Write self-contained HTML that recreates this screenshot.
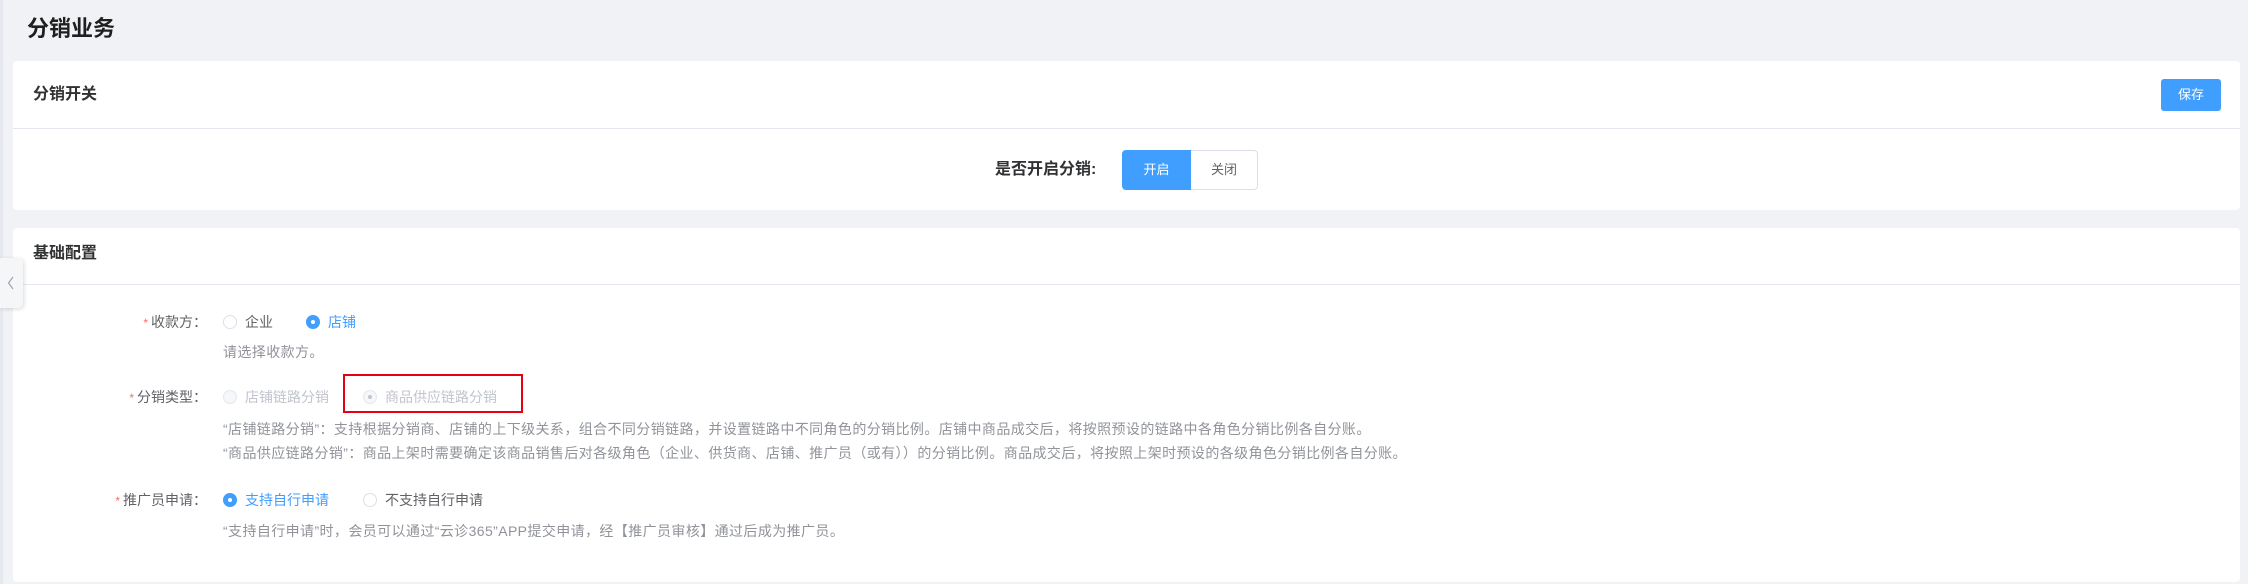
<!DOCTYPE html>
<html><head><meta charset="utf-8"><style>
*{margin:0;padding:0;box-sizing:border-box}
body{width:2248px;height:584px;background:#f0f2f5;font-family:"Liberation Sans","Noto Sans CJK SC",sans-serif;position:relative;overflow:hidden;color:#303133}
.a{position:absolute;white-space:nowrap}
.card{position:absolute;left:13px;width:2227px;background:#fff;border-radius:4px}
.hd{font-size:16px;font-weight:bold;color:#303133}
.line{position:absolute;left:0;right:0;height:1px;background:#e4e7ed}
.t14{font-size:14px;line-height:20px}
.lbl{font-size:14px;color:#606266;text-align:right;width:207px}
.star{color:#f56c6c;font-size:12px;margin-right:3px}
.r{position:absolute;width:14px;height:14px;border-radius:50%;border:1px solid #dcdfe6;background:#fff}
.r.on{background:#409eff;border-color:#409eff}
.r.on::after{content:"";position:absolute;left:4px;top:4px;width:4px;height:4px;border-radius:50%;background:#fff}
.r.dis{background:#f5f7fa;border-color:#e4e7ed}
.r.dison::after{content:"";position:absolute;left:4px;top:4px;width:4px;height:4px;border-radius:50%;background:#c0c4cc}
.hint{font-size:14px;color:#909399;line-height:20px;letter-spacing:0.4px}
</style></head><body>
<div style="position:absolute;left:0;top:0;width:3px;height:584px;background:#e6e8f0"></div>
<div class="a" style="left:27px;top:14px;font-size:22px;font-weight:bold;color:#1f1f1f;line-height:30px">分销业务</div>

<div class="card" style="top:61px;height:149px">
  <div class="a hd" style="left:20px;top:23px;line-height:22px">分销开关</div>
  <div class="a" style="left:2148px;top:18px;width:60px;height:32px;background:#409eff;border-radius:3px;color:#fff;font-size:13px;line-height:32px;text-align:center">保存</div>
  <div class="line" style="top:67px"></div>
  <div class="a" style="left:982px;top:98px;font-size:16px;font-weight:bold;line-height:22px">是否开启分销:</div>
  <div class="a" style="left:1109px;top:89px;width:69px;height:40px;background:#409eff;border-radius:4px 0 0 4px;color:#fff;font-size:13px;line-height:40px;text-align:center">开启</div>
  <div class="a" style="left:1178px;top:89px;width:67px;height:40px;border:1px solid #dcdfe6;border-left:none;border-radius:0 4px 4px 0;color:#606266;font-size:13px;line-height:38px;text-align:center">关闭</div>
</div>

<div class="card" style="top:228px;height:354px">
  <div class="a hd" style="left:20px;top:15px;line-height:22px">基础配置</div>
  <div class="line" style="top:56px"></div>
</div>

<div class="a" style="left:0;top:258px;width:23px;height:50px;background:#f5f6f8;border-radius:0 5px 5px 0;box-shadow:1px 1px 4px rgba(0,0,0,.15)"></div>
<svg class="a" style="left:7px;top:276px" width="8" height="14" viewBox="0 0 8 14"><path d="M6 1L1.5 7L6 13" fill="none" stroke="#a0a4ad" stroke-width="1.2"/></svg>

<div class="a lbl" style="left:0;top:312px;line-height:20px"><span class="star">*</span>收款方：</div>
<div class="r" style="left:223px;top:315px"></div>
<div class="a t14" style="left:245px;top:312px;color:#606266">企业</div>
<div class="r on" style="left:306px;top:315px"></div>
<div class="a t14" style="left:328px;top:312px;color:#409eff">店铺</div>
<div class="a hint" style="left:223px;top:342px">请选择收款方。</div>

<div class="a lbl" style="left:0;top:387px;line-height:20px"><span class="star">*</span>分销类型：</div>
<div class="r dis" style="left:223px;top:390px"></div>
<div class="a t14" style="left:245px;top:387px;color:#c0c4cc">店铺链路分销</div>
<div class="a" style="left:343px;top:374px;width:180px;height:39px;border:2px solid #e60012"></div>
<div class="r dis dison" style="left:363px;top:390px"></div>
<div class="a t14" style="left:385px;top:387px;color:#c0c4cc">商品供应链路分销</div>
<div class="a hint" style="left:223px;top:419px">“店铺链路分销”：支持根据分销商、店铺的上下级关系，组合不同分销链路，并设置链路中不同角色的分销比例。店铺中商品成交后，将按照预设的链路中各角色分销比例各自分账。</div>
<div class="a hint" style="left:223px;top:443px">“商品供应链路分销”：商品上架时需要确定该商品销售后对各级角色（企业、供货商、店铺、推广员（或有））的分销比例。商品成交后，将按照上架时预设的各级角色分销比例各自分账。</div>

<div class="a lbl" style="left:0;top:490px;line-height:20px"><span class="star">*</span>推广员申请：</div>
<div class="r on" style="left:223px;top:493px"></div>
<div class="a t14" style="left:245px;top:490px;color:#409eff">支持自行申请</div>
<div class="r" style="left:363px;top:493px"></div>
<div class="a t14" style="left:385px;top:490px;color:#606266">不支持自行申请</div>
<div class="a hint" style="left:223px;top:521px">“支持自行申请”时，会员可以通过“云诊365”APP提交申请，经【推广员审核】通过后成为推广员。</div>
</body></html>
